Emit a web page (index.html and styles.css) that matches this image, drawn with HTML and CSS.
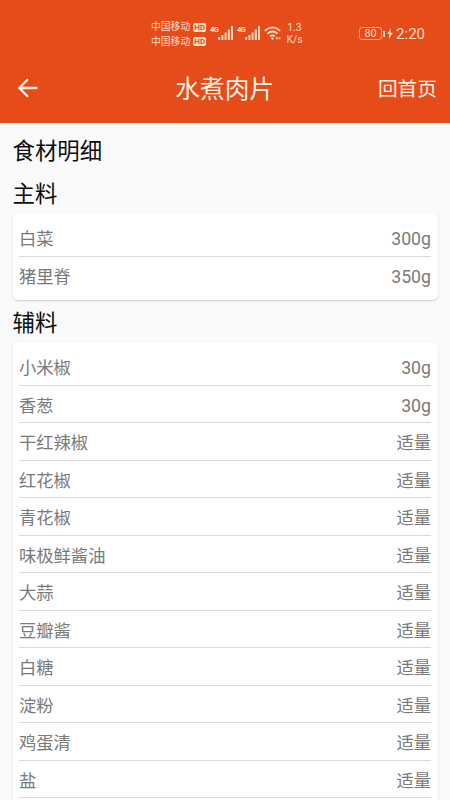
FILE: index.html
```html
<!DOCTYPE html>
<html lang="zh-CN">
<head>
<meta charset="utf-8">
<title>水煮肉片</title>
<link rel="stylesheet" href="styles.css">
</head>
<body>
<header class="header">
  <div class="status">
    <div class="carriers">
      <div class="carrier"><span>中国移动</span><b class="hd">HD</b></div>
      <div class="carrier"><span>中国移动</span><b class="hd">HD</b></div>
    </div>
    <div class="signal"><span class="gen">4G</span>
      <svg width="15" height="14" viewBox="0 0 15 14"><path d="M1.2 14v-3M4.4 14V9M7.6 14V6.5M10.8 14V3.5M14 14V0"/></svg>
    </div>
    <div class="signal"><span class="gen">4G</span>
      <svg width="15" height="14" viewBox="0 0 15 14"><path d="M1.2 14v-3M4.4 14V9M7.6 14V6.5M10.8 14V3.5M14 14V0"/></svg>
    </div>
    <svg class="wifi" width="18" height="14" viewBox="0 0 18 14"><path d="M.8 4.7Q8.5-2 16.2 4.7M3.4 7.7Q8.5 3.3 13.6 7.7M6 10.3Q8.5 8.5 10.8 10.1"/><circle cx="8.5" cy="12.5" r="1.2"/><path class="activity" d="M12 12.3h1.7M14.7 12.3h1.7"/></svg>
    <div class="speed"><span>1.3</span><span>K/s</span></div>
    <div class="power">
      <span class="battery">80</span><i class="tip"></i>
      <svg class="bolt" width="6" height="11" viewBox="0 0 6 11"><path d="M3.8 0 .3 6h2L1.9 11 5.8 4.7H3.5z"/></svg>
      <span class="clock">2:20</span>
    </div>
  </div>
  <nav class="nav">
    <svg class="back" width="20" height="20" viewBox="0 0 20 20"><path d="M19.5 10H1.5M10 1.2 1.3 10l8.7 8.8"/></svg>
    <h1 class="title">水煮肉片</h1>
    <span class="home">回首页</span>
  </nav>
</header>
<main class="content">
  <h2 class="heading page-heading">食材明细</h2>
  <h2 class="heading main-heading">主料</h2>
  <section class="card">
    <div class="row"><span>白菜</span><span class="num">300g</span></div>
    <div class="row"><span>猪里脊</span><span class="num">350g</span></div>
  </section>
  <h2 class="heading side-heading">辅料</h2>
  <section class="card">
    <div class="row"><span>小米椒</span><span class="num">30g</span></div>
    <div class="row"><span>香葱</span><span class="num">30g</span></div>
    <div class="row"><span>干红辣椒</span><span>适量</span></div>
    <div class="row"><span>红花椒</span><span>适量</span></div>
    <div class="row"><span>青花椒</span><span>适量</span></div>
    <div class="row"><span>味极鲜酱油</span><span>适量</span></div>
    <div class="row"><span>大蒜</span><span>适量</span></div>
    <div class="row"><span>豆瓣酱</span><span>适量</span></div>
    <div class="row"><span>白糖</span><span>适量</span></div>
    <div class="row"><span>淀粉</span><span>适量</span></div>
    <div class="row"><span>鸡蛋清</span><span>适量</span></div>
    <div class="row open"><span>盐</span><span>适量</span></div>
  </section>
</main>
</body>
</html>
```
FILE: styles.css
```css
* { box-sizing: border-box; }
html { height: 100%; overflow: hidden; }
body {
  height: 800px;
  margin: 0;
  overflow: hidden;
  background: #fafafa;
  color: #0c0c0c;
  font-family: Roboto, "Noto Sans CJK SC", sans-serif;
}
h1, h2 { margin: 0; font-weight: 400; }
.header { height: 122.5px; background: #e64c1a; color: #fff3e6; }
.status {
  display: flex;
  align-items: flex-start;
  height: 54px;
  padding: 19px 25px 0 151px;
  color: #ffdcc4;
}
.status svg { display: block; flex: none; fill: none; stroke: #ffdcc4; }
.carriers { width: 59px; padding-top: 1px; }
.carrier { display: flex; gap: 3px; align-items: center; height: 14.5px; font-size: 9.8px; line-height: 14px; white-space: nowrap; }
.hd {
  width: 13px;
  height: 9px;
  border-radius: 2px;
  background: #ffdcc4;
  color: #e64c1a;
  font-size: 8px;
  line-height: 9px;
  text-align: center;
}
.signal { display: flex; width: 27px; padding-top: 7px; }
.signal svg { stroke-width: 2; }
.gen { width: 8px; font-size: 7.5px; font-weight: 700; line-height: 8px; letter-spacing: -.5px; }
.wifi { margin-top: 7px; stroke-width: 1.8; }
.status .wifi circle { fill: #ffdcc4; stroke: none; }
.wifi .activity { stroke-width: 2; }
.speed { width: 25px; padding-top: 3px; text-align: center; font-size: 10.4px; line-height: 12px; }
.speed span { display: block; }
.power { display: flex; align-items: center; height: 20px; margin: 4.5px 0 0 auto; }
.battery {
  width: 23px;
  height: 13px;
  border: 1px solid #f9ad8a;
  border-radius: 3px;
  font-size: 10.8px;
  line-height: 12px;
  text-align: center;
}
.tip { width: 2px; height: 6px; margin-left: 1px; background: #ffdcc4; }
.status .bolt { margin: 0 3px 0 2px; fill: #ffdcc4; stroke: none; }
.clock { font-size: 15px; line-height: 20px; }
.nav {
  display: grid;
  grid-template-columns: 1fr auto 1fr;
  align-items: center;
  height: 68px;
  padding: 0 13px 0 17.5px;
}
.back { fill: none; stroke: #fff3e6; stroke-width: 2.3; }
.title { margin: 4px 5px 0 0; font-size: 24.7px; line-height: 36px; }
.home { justify-self: end; padding-top: 4px; font-size: 19.7px; line-height: 30px; }
.content { padding: 0 12.5px; }
.heading { font-size: 22.4px; line-height: 32px; }
.page-heading { padding-top: 12px; }
.main-heading { margin: 11px 0 3.5px; }
.side-heading { margin: 7px 0 3.5px; }
.card {
  padding: 6px 6.5px 5.5px;
  border-radius: 5px;
  background: #fff;
  box-shadow: 0 1px 2px rgba(0, 0, 0, .18);
}
.row {
  display: flex;
  justify-content: space-between;
  height: 37.5px;
  padding-top: 2px;
  border-bottom: 1px solid #dadada;
  color: #7a7a7a;
  font-size: 17.3px;
  line-height: 37.5px;
}
.num { font-size: 17.7px; }
.card .row:last-child:not(.open) { border-bottom: 0; }
```
